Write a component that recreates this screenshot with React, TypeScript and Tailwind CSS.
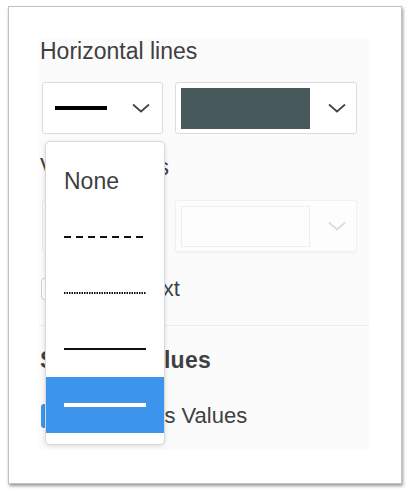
import React from "react";

const FONT = { fontFamily: '"Liberation Sans", Arial, sans-serif' };

function Chevron({ color = "#444" }: { color?: string }) {
  return (
    <svg width="18" height="10" viewBox="0 0 18 10" fill="none">
      <polyline points="1,1.5 9,8.5 17,1.5" stroke={color} strokeWidth="1.7" fill="none" />
    </svg>
  );
}

function Line({ kind, color = "#111" }: { kind: "dash" | "dot" | "solid" | "thick"; color?: string }) {
  const props: Record<string, any> = {};
  let w = 2;
  if (kind === "dash") props.strokeDasharray = "7 5";
  if (kind === "dot") props.strokeDasharray = "1.5 1";
  if (kind === "thick") w = 4;
  return (
    <svg width="82" height="6" viewBox="0 0 82 6">
      <line x1="0" y1="3" x2="82" y2="3" stroke={color} strokeWidth={w} {...props} />
    </svg>
  );
}

export default function App() {
  return (
    <div className="w-[410px] h-[491px] bg-white pt-[6px] pl-[8px]" style={FONT}>
      <div className="w-[394px] h-[478px] border border-[#c2c2c2] bg-white shadow-[1px_2px_3px_rgba(0,0,0,0.4)] pt-[31px] pl-[30px]">
        <div className="relative w-[330px] h-[412px] bg-[#fbfbfb] pt-[2px] px-[3px] text-[#404040]">
          <div className="text-[23px] leading-[22px] -ml-[2px] h-[22px]">Horizontal lines</div>
          <div className="mt-[20px] flex gap-[12px]">
            <div className="w-[121px] h-[52px] bg-white border border-[#dcdcdc] rounded-[3px] flex items-center pl-[12px] pr-[12px] justify-between">
              <div className="w-[52px] h-[4px] bg-black" />
              <Chevron />
            </div>
            <div className="w-[182px] h-[52px] bg-white border border-[#dcdcdc] rounded-[3px] flex items-center pl-[5px] pr-[10px] justify-between">
              <div className="w-[129px] h-[41px] bg-[#47595b]" />
              <Chevron />
            </div>
          </div>

          <div className="mt-[22px] text-[23px] leading-[22px] -ml-[2px] h-[22px]">Vertical lines</div>
          <div className="mt-[22px] flex gap-[12px] opacity-60">
            <div className="w-[121px] h-[52px] bg-white border border-[#e2e2e2] rounded-[3px] flex items-center pl-[12px] pr-[12px] justify-between">
              <div className="w-[52px] h-[4px] bg-[#bbb]" />
              <Chevron color="#bbb" />
            </div>
            <div className="w-[182px] h-[52px] bg-white border border-[#ececec] rounded-[3px] flex items-center pl-[5px] pr-[10px] justify-between shadow-[0_1px_2px_rgba(0,0,0,0.06)]">
              <div className="w-[129px] h-[41px] bg-white border border-[#e6e6e6]" />
              <Chevron color="#c8c8c8" />
            </div>
          </div>

          <div className="mt-[26px] flex items-center gap-[6px] h-[22px] -ml-[1px]">
            <div className="w-[22px] h-[22px] bg-white border border-[#cfcfcf] rounded-[3px]" />
            <span className="text-[22px] leading-[22px]">Rotate Text</span>
          </div>

          <div className="mt-[25px] -mx-[3px] h-px bg-[#ececec]" />

          <div className="mt-[23px] text-[23px] leading-[22px] font-bold h-[22px] -ml-[2px] tracking-[0.25px]">Stacked Values</div>

          <div className="mt-[33px] flex items-center gap-[6px] h-[24px] -ml-[1px]">
            <div className="w-[22px] h-[24px] bg-[#3d94ed] rounded-[3px] flex items-center justify-center">
              <svg width="14" height="12" viewBox="0 0 14 12"><polyline points="1,6 5,10 13,1" stroke="#fff" strokeWidth="2.4" fill="none" /></svg>
            </div>
            <span className="text-[22px] leading-[22px]">Show Bars Values</span>
          </div>

          <div className="absolute left-[6px] top-[103px] w-[120px] h-[304px] bg-white border border-[#d9d9d9] rounded-[5px] shadow-[0_1px_4px_rgba(0,0,0,0.14)] py-[11px] overflow-hidden">
            <div className="h-[56px] flex items-center pl-[18px] text-[23px] leading-[22px] text-[#404040]">None</div>
            <div className="h-[56px] flex items-center pl-[18px]"><Line kind="dash" /></div>
            <div className="h-[56px] flex items-center pl-[18px]"><Line kind="dot" color="#111" /></div>
            <div className="h-[56px] flex items-center pl-[18px]"><Line kind="solid" /></div>
            <div className="h-[56px] flex items-center pl-[18px] bg-[#3d94ed]"><Line kind="thick" color="#fff" /></div>
          </div>
        </div>
      </div>
    </div>
  );
}
